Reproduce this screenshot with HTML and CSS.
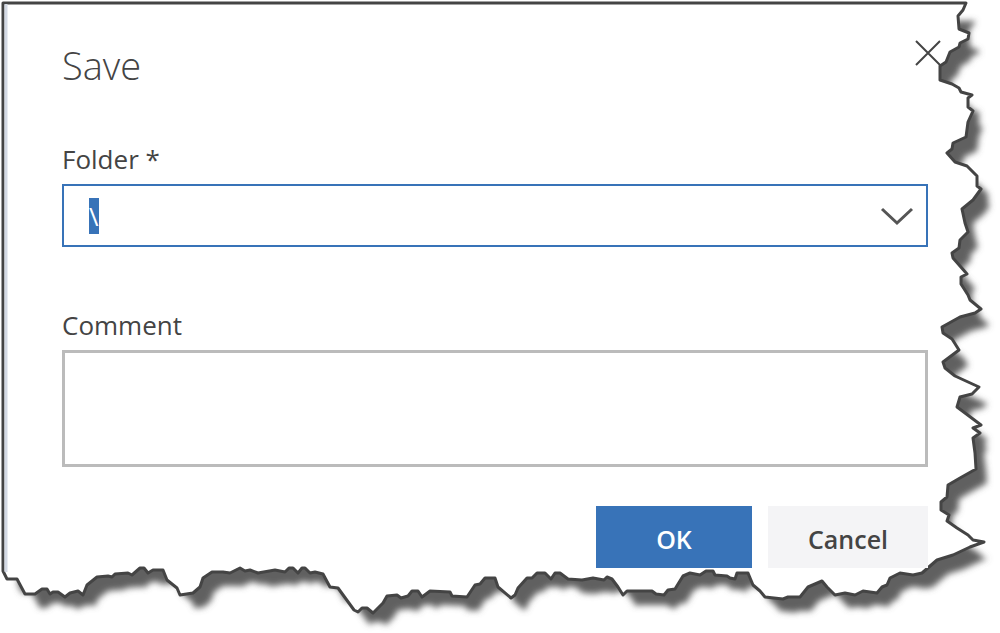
FILE: index.html
```html
<!DOCTYPE html>
<html lang="en">
<head>
<meta charset="utf-8">
<meta name="viewport" content="width=device-width, initial-scale=1">
<title>Save</title>
<link rel="stylesheet" href="styles.css">
</head>
<body>
<main class="dialog" role="dialog" aria-labelledby="dialog-title">
  <svg class="paper" viewBox="0 0 1000 633" preserveAspectRatio="none" aria-hidden="true">
    <defs>
      <filter id="paper-shadow" filterUnits="userSpaceOnUse" x="0" y="0" width="1000" height="633">
        <feMorphology operator="erode" radius="2"/>
        <feOffset dx="13" dy="16"/>
        <feGaussianBlur stdDeviation="3"/>
      </filter>
      <path id="torn-sheet" d="M3 3H966L963 10 958 16 959 29 969 33 968 39 960 43 959 47 950 52 946 62 940 66 940 80 952 84 959 88 961 92 972 95 968 98 968 107 973 111 968 122 966 137 953 143 952 149 947 153 955 162 967 166 977 176 977 186 981 189 973 200 962 209 965 223 968 232 960 240 959 248 952 253 953 258 967 274 961 277 961 284 968 295 970 300 981 309 975 313 960 317 942 327 943 333 952 339 959 350 943 362 945 368 955 376 979 387 972 394 960 397 957 407 981 425 973 428 980 433 973 438 975 453 976 469 960 478 948 485 947 497 941 502 941 510 949 515 947 521 957 528 968 535 973 540 984 542 970 547 953 555 937 560 922 573 913 575 900 573 890 578 887 585 882 587 877 593 863 591 855 595 845 593 835 595 827 587 822 581 808 587 800 597 788 597 783 599 765 597 760 591 753 585 748 573 737 573 735 579 730 578 727 576 715 575 713 571 706 571 700 575 690 573 683 576 675 589 668 590 664 595 656 594 652 591 627 591 623 595 618 587 612 579 607 577 604 580 593 578 582 580 568 579 560 573 555 573 551 579 545 573 537 573 532 578 527 578 518 588 515 595 511 598 498 587 495 578 485 578 480 584 475 585 467 597 452 596 450 592 430 591 422 597 418 591 412 591 408 596 401 598 397 595 387 596 383 603 373 613 367 608 362 608 358 612 354 610 338 588 330 587 323 574 315 572 310 573 305 568 302 568 298 573 293 568 289 568 285 572 275 570 258 573 250 570 245 571 240 568 230 573 223 572 212 572 203 578 200 587 193 593 180 595 177 588 167 580 163 570 153 570 148 573 144 568 140 568 132 575 128 573 115 574 112 577 108 576 97 577 87 585 83 595 78 591 70 593 65 597 58 592 53 592 50 594 47 589 42 589 35 594 25 594 17 579 7 579 3 571Z"/>
    </defs>
    <use href="#torn-sheet" class="paper-shadow" filter="url(#paper-shadow)"/>
    <use href="#torn-sheet" class="paper-face"/>
    <path class="paper-fold" d="M6 4V572"/>
  </svg>
  <header class="header">
    <h1 class="title" id="dialog-title">Save</h1>
    <button class="close" type="button" aria-label="Close">
      <svg width="26" height="26" viewBox="0 0 26 26"><path d="M1 1 25 25M25 1 1 25"/></svg>
    </button>
  </header>
  <form class="form">
    <label class="label" for="folder">Folder *</label>
    <div class="combo">
      <input class="combo-input" id="folder" type="text" value="\" required autocomplete="off" spellcheck="false">
      <button class="combo-toggle" type="button" aria-label="Show folders">
        <svg width="34" height="20" viewBox="0 0 34 20"><path d="M2 3 17 17 32 3"/></svg>
      </button>
    </div>
    <label class="label" for="comment">Comment</label>
    <textarea class="comment" id="comment"></textarea>
    <div class="actions">
      <button class="button button-primary" type="button">OK</button>
      <button class="button" type="button">Cancel</button>
    </div>
  </form>
</main>
<script src="script.js"></script>
</body>
</html>
```
FILE: styles.css
```css
* { box-sizing: border-box; }

body {
  margin: 0;
  background: #fff;
  color: #444;
  font-family: "Open Sans", "Noto Sans", sans-serif;
  font-size: 26px;
}

.dialog {
  position: relative;
  min-height: 100vh;
  padding: 35px 72px 64px 62px;
}

.paper {
  position: absolute;
  inset: 0;
  z-index: -1;
  width: 100%;
  height: 100%;
}
.paper-shadow { fill: #606060; }
.paper-face { fill: #fff; stroke: #444; stroke-width: 3; stroke-linejoin: round; }
.paper-fold { stroke: #d3d9e4; stroke-width: 3; }

.header {
  display: flex;
  justify-content: space-between;
  align-items: flex-start;
  margin-right: -15px;
}
.title {
  margin: 0;
  color: #444;
  font-size: 38px;
  font-weight: 300;
  line-height: 60px;
}

button { border: 0; font: inherit; color: inherit; cursor: pointer; }
button svg { display: block; fill: none; stroke: #444; stroke-width: 2; }

.close { padding: 5px 2px; background: none; }

.form { display: flex; flex-direction: column; }
.label { margin-top: 48px; line-height: 32px; }

.combo {
  display: flex;
  align-items: center;
  height: 63px;
  margin-top: 9px;
  border: 2px solid #3873b8;
}
.combo-input {
  flex: 1;
  min-width: 0;
  padding: 0 25px;
  border: 0;
  outline: 0;
  background: none;
  color: inherit;
  font: inherit;
}
.combo-input::selection { background: #3873b8; color: #fff; }
.combo-toggle { padding: 12px; background: none; }
.combo-toggle svg { stroke: #555; stroke-width: 3; }

.combo + .label { margin-top: 62px; }
.comment {
  height: 117px;
  margin-top: 9px;
  padding: 8px 24px;
  border: 3px solid #bbb;
  outline: 0;
  background: none;
  color: inherit;
  font: inherit;
  resize: none;
}

.actions {
  display: flex;
  justify-content: flex-end;
  gap: 16px;
  margin-top: 39px;
}
.button {
  min-width: 160px;
  height: 62px;
  padding: 4px 16px 0;
  background: #f4f4f6;
  font-size: 25px;
  font-weight: 600;
}
.button-primary { min-width: 156px; background: #3873b8; color: #fff; }
```
FILE: script.js
```js
const folder = document.getElementById("folder");
folder.focus();
folder.select();
```
